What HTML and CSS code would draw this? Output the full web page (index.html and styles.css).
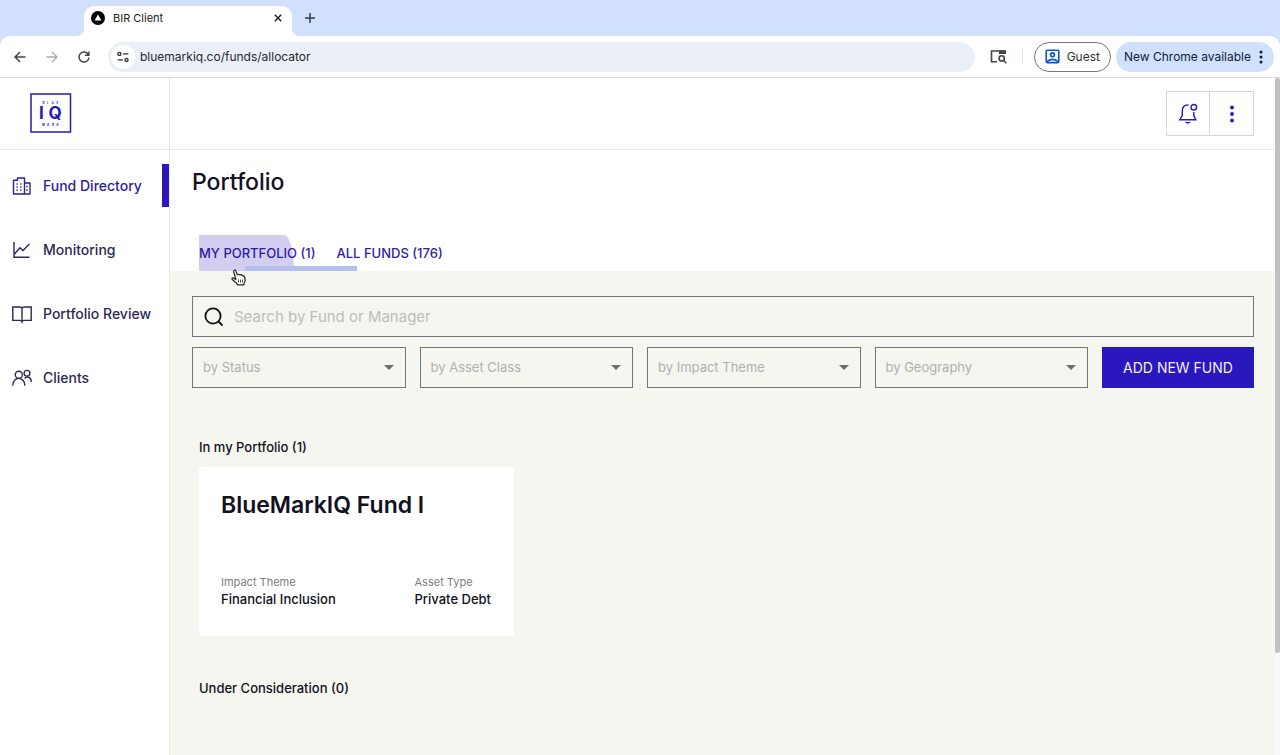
FILE: index.html
```html
<!DOCTYPE html>
<html lang="en">
<head>
    <meta charset="UTF-8">
    <title>BIR Client</title>
    <link rel="stylesheet" href="styles.css">
</head>
<body>
    <!-- Browser bar -->
    <div class="browser">
        <div class="tab-strip">
            <div class="browser-tab">
                <svg width="14" height="14" viewBox="0 0 14 14"><circle cx="7" cy="7" r="7" fill="#000"/><path d="M7 3.4l3.4 6H3.6z" fill="#fff"/></svg>
                <span class="tab-title">BIR Client</span>
                <button class="icon-button" aria-label="Close tab">
                    <svg width="8" height="8" viewBox="0 0 8 8" fill="none" stroke="#222" stroke-width="1.5"><path d="M.8.8l6.4 6.4M7.2.8L.8 7.2"/></svg>
                </button>
            </div>
            <button class="icon-button new-tab" aria-label="New tab">
                <svg width="10" height="10" viewBox="0 0 10 10" fill="none" stroke="#333c4d" stroke-width="1.5"><path d="M5 0v10M0 5h10"/></svg>
            </button>
        </div>
        <div class="toolbar">
            <div class="nav-buttons">
                <button class="icon-button" aria-label="Back">
                    <svg width="12" height="12" viewBox="0 0 12 12" fill="none" stroke="#444" stroke-width="1.5"><path d="M11.5 6H1M6 1L1 6l5 5"/></svg>
                </button>
                <button class="icon-button" aria-label="Forward">
                    <svg width="12" height="12" viewBox="0 0 12 12" fill="none" stroke="#aaa" stroke-width="1.3"><path d="M.5 6H11M6 1l5 5-5 5"/></svg>
                </button>
                <button class="icon-button" aria-label="Reload">
                    <svg width="12" height="12" viewBox="0 0 12 12" fill="none" stroke="#444" stroke-width="1.5"><path d="M10.3 3.5A5 5 0 1 0 11 6.6M10.9.5v3.8H7"/></svg>
                </button>
            </div>
            <div class="address">
                <span class="site-info">
                    <svg width="12" height="12" viewBox="0 0 12 12" fill="none" stroke="#333" stroke-width="1.4"><circle cx="2.4" cy="2.9" r="1.5"/><path d="M6 2.9h5.3M.7 8.9H6"/><circle cx="9.5" cy="8.9" r="1.5"/></svg>
                </span>
                <input class="address-input" type="text" aria-label="Address" value="bluemarkiq.co/funds/allocator">
            </div>
            <button class="icon-button side-search" aria-label="Search tabs">
                <svg width="17" height="15" viewBox="0 0 17 15" fill="none" stroke="#454545" stroke-width="1.6"><path d="M7 12.7H1.5V2h13.7v3"/><path d="M9 3.2h7" stroke-width="3.6"/><circle cx="11.7" cy="9.4" r="2.6"/><path d="M13.6 11.3l2.7 2.9"/></svg>
            </button>
            <button class="guest">
                <svg width="15" height="15" viewBox="0 0 15 15" fill="none" stroke="#0b57d0" stroke-width="1.6"><rect x="1.2" y="1.2" width="12.6" height="12.4" rx="1"/><circle cx="7.5" cy="5.8" r="1.9"/><path d="M2 12.6q5.5-4.5 11 0"/></svg>
                Guest
            </button>
            <button class="update">
                New Chrome available
                <svg width="4" height="14" viewBox="0 0 4 14" fill="#0b1d3a"><circle cx="2" cy="2" r="1.5"/><circle cx="2" cy="7" r="1.5"/><circle cx="2" cy="12" r="1.5"/></svg>
            </button>
        </div>
    </div>

    <div class="app">
        <aside class="sidebar">
            <a class="logo" href="#" aria-label="BlueMark IQ">
                <svg width="42" height="40" viewBox="0 0 42 40" font-family="Inter, sans-serif" font-weight="700" fill="#2a17bd">
                    <rect x="1" y="1" width="39.5" height="38" fill="none" stroke="#2a17bd" stroke-width="1.5"/>
                    <text x="12.5 17 21.5 26.5" y="11" font-size="3">BLUE</text>
                    <text x="9 18.500" y="26" font-size="17">IQ</text>
                    <text x="12 17 22 26.5" y="33" font-size="3">MARK</text>
                </svg>
            </a>
            <nav class="menu">
                <a class="menu-item active" href="#">
                    <svg width="20" height="20" viewBox="0 0 20 20" fill="none" stroke="currentColor" stroke-width="1.4" stroke-linejoin="round"><path d="M1.5 18V4.2h4V2h7v16zM12.5 7H18v11H1.500"/><path d="M4.5 8h1.3m2.4 0h1.3m-5 3h1.3m2.4 0h1.3m-5 3h1.3m2.4 0h1.3m4.7-3.5h1.4m-1.4 3.5h1.4"/></svg>
                    Fund Directory
                </a>
                <a class="menu-item" href="#">
                    <svg width="20" height="20" viewBox="0 0 20 20" fill="none" stroke="currentColor" stroke-width="1.4"><path d="M2 2v15.3h15.5M2.5 14L8 7.8l3 2.7L17.3 4"/></svg>
                    Monitoring
                </a>
                <a class="menu-item" href="#">
                    <svg width="20" height="20" viewBox="0 0 20 20" fill="none" stroke="currentColor" stroke-width="1.4"><path d="M10 4.2Q9.4 3 8 3H.8v13.4h7.5q1.3 0 1.7 1.4.4-1.4 1.7-1.4h7.5V3H12q-1.4 0-2 1.2v13.6"/></svg>
                    Portfolio Review
                </a>
                <a class="menu-item" href="#">
                    <svg width="20" height="20" viewBox="0 0 22 20" fill="none" stroke="currentColor" stroke-width="1.5"><circle cx="7.5" cy="6.500" r="3.900"/><path d="M.8 18.500c0-10.800 13.400-10.800 13.400 0"/><circle cx="16.500" cy="4.800" r="3.200"/><path d="M13.800 10.500c3-3.200 7.400-1 7.400 4"/></svg>
                    Clients
                </a>
            </nav>
        </aside>

        <div class="content">
            <header class="topbar">
                <div class="actions">
                    <button class="action" aria-label="Notifications">
                        <svg width="20" height="21" viewBox="0 0 20 21" fill="none" stroke="#2a17bd" stroke-width="1.4"><path d="M10.500 2C6 1.700 4.300 4.500 4.300 8v4.500L1.800 16.700h16l-2-4.200V9"/><circle cx="15.800" cy="4.300" r="2.800"/><path d="M7.500 19q2.300 1.500 4.600 0"/></svg>
                    </button>
                    <button class="action" aria-label="More">
                        <svg width="4" height="18" viewBox="0 0 4 18" fill="#2a17bd"><circle cx="2" cy="2.500" r="1.900"/><circle cx="2" cy="9" r="1.900"/><circle cx="2" cy="15.500" r="1.900"/></svg>
                    </button>
                </div>
            </header>

            <div class="page-head">
                <h1>Portfolio</h1>
                <div class="tabs" role="tablist">
                    <button class="tab selected" role="tab" aria-selected="true">MY PORTFOLIO (1)</button>
                    <button class="tab" role="tab" aria-selected="false">ALL FUNDS (176)</button>
                    <span class="indicator"></span>
                </div>
            </div>

            <main>
                <label class="search">
                    <svg width="20" height="20" viewBox="0 0 20 20" fill="none" stroke="#111" stroke-width="1.800"><circle cx="9" cy="9" r="7.600"/><path d="M14.500 14.500l4 4"/></svg>
                    <input type="text" placeholder="Search by Fund or Manager" aria-label="Search by Fund or Manager">
                </label>
                <div class="filters">
                    <div class="filter"><select aria-label="Status"><option>by Status</option></select></div>
                    <div class="filter"><select aria-label="Asset Class"><option>by Asset Class</option></select></div>
                    <div class="filter"><select aria-label="Impact Theme"><option>by Impact Theme</option></select></div>
                    <div class="filter"><select aria-label="Geography"><option>by Geography</option></select></div>
                    <button class="add-fund">ADD NEW FUND</button>
                </div>

                <section>
                    <h2>In my Portfolio (1)</h2>
                    <article class="card">
                        <h3>BlueMarkIQ Fund I</h3>
                        <dl>
                            <div>
                                <dt>Impact Theme</dt>
                                <dd>Financial Inclusion</dd>
                            </div>
                            <div>
                                <dt>Asset Type</dt>
                                <dd>Private Debt</dd>
                            </div>
                        </dl>
                    </article>
                </section>
                <section>
                    <h2>Under Consideration (0)</h2>
                </section>
            </main>
        </div>
        <div class="scroll-track">
            <div class="scroll-thumb"></div>
        </div>
    </div>

    <svg class="pointer" width="15" height="17" viewBox="0 0 15 17" fill="#fff" stroke="#222" stroke-width="1.2" stroke-linejoin="round"><path d="M4.700 9.500L2.700 3Q2.500 1.300 3.600 1 4.600.8 5 2.200l1.200 3.500q1.800-1 2.600.3 1.800-.8 2.500.6 2-.2 2.500 2l.3 3q0 1.800-1.200 2.900v1.300H6.600L5 13.700 1.200 10.500Q.5 9.300 1.700 8.800q1-.2 3 1.700z"/><path d="M7.500 10.500v3m2-3v3m2-3v3" stroke-width=".8"/></svg>
</body>
</html>
```
FILE: styles.css
```css
* {
    box-sizing: border-box;
}

body {
    margin: 0;
    height: 100vh;
    display: flex;
    flex-direction: column;
    overflow: hidden;
    font-family: Inter, sans-serif;
    color: #111122;
    background-color: #fff;
}

button {
    font-family: inherit;
    cursor: pointer;
}

svg {
    flex: none;
    display: block;
}

/* Browser bar */
.browser {
    background-color: #d1e1fd;
    border-bottom: 1px solid #dedede;
}

.tab-strip {
    display: flex;
    align-items: flex-end;
    height: 36px;
    padding-left: 84px;
}

.browser-tab {
    position: relative;
    display: flex;
    align-items: center;
    width: 208px;
    height: 30px;
    padding: 0 10px 6px 7px;
    border-radius: 10px 10px 0 0;
    background-color: #fff;
}

/* flared feet of the active tab */
.browser-tab::before,
.browser-tab::after {
    content: "";
    position: absolute;
    bottom: 0;
    width: 8px;
    height: 8px;
}

.browser-tab::before {
    left: -8px;
    background: radial-gradient(circle at 0 0, transparent 8px, #fff 8px);
}

.browser-tab::after {
    right: -8px;
    background: radial-gradient(circle at 100% 0, transparent 8px, #fff 8px);
}

.tab-title {
    flex: 1;
    margin-left: 8px;
    font-size: 11px;
    color: #222;
}

.icon-button {
    padding: 0;
    border: none;
    background: none;
}

.new-tab {
    margin: 0 0 13px 13px;
}

.toolbar {
    display: flex;
    align-items: center;
    height: 41px;
    padding: 0 6px 0 14px;
    border-radius: 10px 10px 0 0;
    background-color: #fff;
}

.nav-buttons {
    display: flex;
    gap: 20px;
    margin-right: 18px;
}

.address {
    flex: 1;
    display: flex;
    align-items: center;
    height: 30px;
    padding-left: 3px;
    border-radius: 15px;
    background-color: #ebf0f8;
}

.site-info {
    display: grid;
    place-items: center;
    width: 24px;
    height: 24px;
    border-radius: 50%;
    background-color: #fff;
}

.address-input {
    flex: 1;
    margin-left: 5px;
    padding: 0;
    border: none;
    outline: none;
    background: none;
    font: 12px Inter, sans-serif;
    color: #26282c;
}

.side-search {
    margin: 0 11px 0 15px;
    padding-right: 15px;
    border-right: 1px solid #d1e1fd;
}

.guest,
.update {
    display: flex;
    align-items: center;
    height: 30px;
    border: none;
    border-radius: 15px;
    font-size: 12px;
    white-space: nowrap;
}

.guest {
    gap: 7px;
    padding: 0 10px;
    border: 1px solid #777;
    background-color: #fff;
    color: #333;
}

.update {
    gap: 8px;
    margin-left: 5px;
    padding: 0 11px 0 8px;
    background-color: #d1e1fd;
    color: #0b1d3a;
}

/* App */
.app {
    flex: 1;
    display: flex;
    min-height: 0;
}

.sidebar {
    width: 170px;
    flex: none;
    border-right: 1px solid #e8e8e8;
}

.logo {
    display: block;
    height: 72px;
    padding: 15px 30px;
    border-bottom: 1px solid #e8e8e8;
}

.menu {
    display: flex;
    flex-direction: column;
    gap: 21px;
    padding-top: 14px;
}

.menu-item {
    display: flex;
    align-items: center;
    gap: 11px;
    height: 43px;
    padding-left: 12px;
    font-size: 14px;
    font-weight: 500;
    color: #2d2852;
    text-decoration: none;
    white-space: nowrap;
}

.menu-item.active {
    color: #2e1da0;
    border-right: 7px solid #2a17bd;
}

.content {
    flex: 1;
    display: flex;
    flex-direction: column;
    min-width: 0;
}

.topbar {
    display: flex;
    justify-content: flex-end;
    height: 72px;
    padding: 13px 21px 0 0;
    border-bottom: 1px solid #e8e8e8;
}

.actions {
    display: flex;
    height: 45px;
    border: 1px solid #d5d5dc;
}

.action {
    display: grid;
    place-items: center;
    width: 42px;
    padding: 0;
    border: none;
    background: none;
}

.action + .action {
    width: 44px;
    border-left: 1px solid #d5d5dc;
}

.page-head {
    padding: 18px 22px 0;
}

h1 {
    margin: 0 0 39px;
    font-size: 23px;
    line-height: 28px;
    font-weight: 500;
}

.tabs {
    position: relative;
    display: flex;
    height: 36px;
    margin-left: 7px;
}

.tab {
    padding: 0;
    margin-right: 21px;
    border: none;
    background: none;
    font-size: 13px;
    font-weight: 500;
    color: #2e1da0;
}

.tab.selected {
    position: relative;
    z-index: 0;
}

/* press ripple spreading across the tab */
.tab.selected::before {
    content: "";
    position: absolute;
    z-index: -1;
    inset: 0 auto 0 0;
    width: 95px;
    border-radius: 0 10px 0 0 / 0 36px 0 0;
    background-color: #d3cdf1;
}

.indicator {
    position: absolute;
    left: 46px;
    bottom: 0;
    width: 112px;
    height: 5px;
    background-color: #b5bfee;
}

main {
    flex: 1;
    padding: 25px 21px 0 22px;
    background-color: #f5f6f0;
}

.search {
    display: flex;
    align-items: center;
    gap: 10px;
    height: 41px;
    padding: 0 11px;
    border: 1px solid #74747f;
}

.search input {
    flex: 1;
    padding: 0;
    border: none;
    outline: none;
    background: none;
    font: 15px Inter, sans-serif;
}

.search input::placeholder {
    color: #bdbdbb;
}

.filters {
    display: grid;
    grid-template-columns: repeat(4, 1fr) 152px;
    gap: 14px;
    margin-top: 10px;
}

.filter {
    position: relative;
}

.filter::after {
    content: "";
    position: absolute;
    right: 12px;
    top: 18px;
    border: 5px solid transparent;
    border-top-color: #6e6e6e;
    border-bottom: none;
    pointer-events: none;
}

.filter select {
    width: 100%;
    height: 41px;
    padding: 0 30px 2px 10px;
    border: 1px solid #74747f;
    border-radius: 0;
    appearance: none;
    background: none;
    font: 13px Inter, sans-serif;
    color: #b0b0ae;
}

.add-fund {
    border: none;
    background-color: #2a17bd;
    color: #f1effb;
    font-size: 14px;
}

section {
    padding: 49px 7px 0;
}

h2 {
    margin: 0;
    font-size: 13px;
    line-height: 20px;
    font-weight: 500;
}

.card {
    width: 315px;
    margin-top: 10px;
    padding: 24px 23px 28px 22px;
    background-color: #fff;
    border-radius: 3px;
}

h3 {
    margin: 0 0 55px;
    font-size: 23px;
    line-height: 28px;
    font-weight: 600;
}

dl {
    display: flex;
    justify-content: space-between;
    margin: 0;
}

dt {
    font-size: 11px;
    line-height: 16px;
    color: #7d7d86;
}

dd {
    margin: 0;
    font-size: 13px;
    line-height: 18px;
    font-weight: 500;
}

section + section {
    padding-top: 42px;
}

.scroll-track {
    width: 5px;
    background-color: #fafafa;
}

.scroll-thumb {
    height: 85%;
    border-radius: 2px;
    background-color: #c1c1c1;
}

.pointer {
    position: absolute;
    left: 231px;
    top: 269px;
}
```
